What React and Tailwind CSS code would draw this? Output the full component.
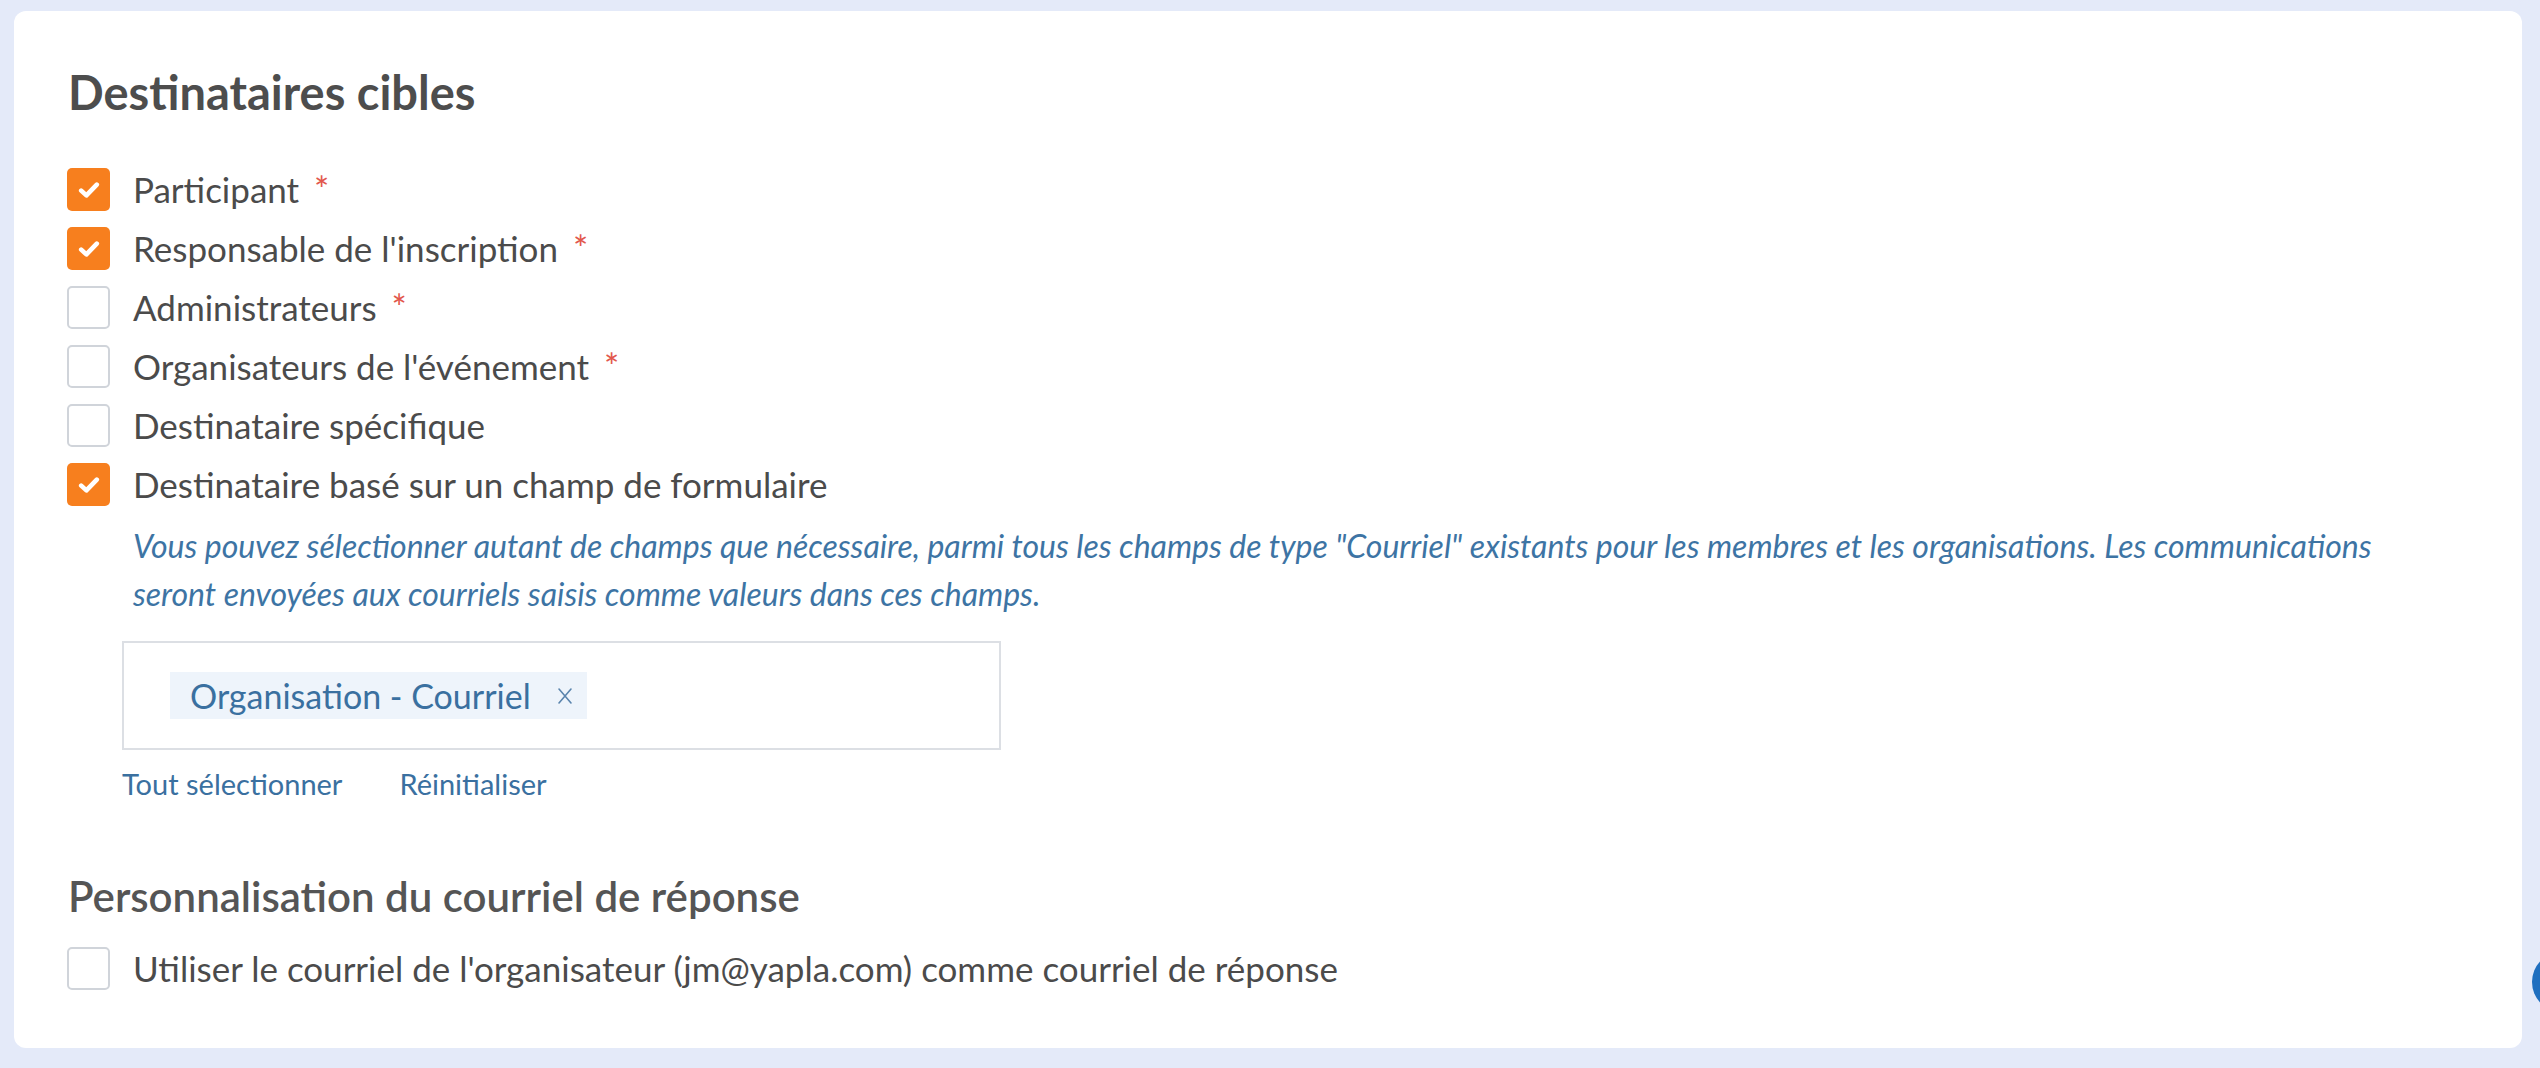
import React from "react";

function Check({ checked }) {
  if (checked) {
    return (
      <span className="flex h-[43px] w-[43px] shrink-0 items-center justify-center rounded-[5px] bg-[#f77f1e]">
        <svg width="22" height="18" viewBox="0 0 22 18" fill="none">
          <path d="M3.2 9.6 L8.4 14.4 L18.8 3.6" stroke="#ffffff" strokeWidth="4.6" strokeLinecap="round" strokeLinejoin="round" />
        </svg>
      </span>
    );
  }
  return <span className="h-[43px] w-[43px] shrink-0 rounded-[5px] border-2 border-[#d0d4da] bg-white" />;
}

function Row({ checked, label, required }) {
  return (
    <div className="flex h-[43px] items-center gap-[23px]">
      <Check checked={checked} />
      <span className="text-[35px] leading-[43px] text-[#4b4b4b]">
        {label}
        {required && <span className="ml-[15px] text-[36px] text-[#e2574c]">*</span>}
      </span>
    </div>
  );
}

export default function App() {
  const rows = [
    { checked: true, label: "Participant", required: true },
    { checked: true, label: "Responsable de l'inscription", required: true },
    { checked: false, label: "Administrateurs", required: true },
    { checked: false, label: "Organisateurs de l'événement", required: true },
    { checked: false, label: "Destinataire spécifique", required: false },
    { checked: true, label: "Destinataire basé sur un champ de formulaire", required: false },
  ];
  return (
    <div
      className="relative h-[1068px] w-full overflow-hidden bg-[#e4eaf9] pl-[14px] pr-[18px] pt-[11px]"
      style={{ fontFamily: "Lato, 'Noto Sans', sans-serif" }}
    >
      <div className="h-[1037px] rounded-[12px] bg-white pl-[53px] pr-[40px]">
        <h1 className="pt-[61px] pl-[1px] text-[47px] font-bold leading-[40px] text-[#4d4d4d]">
          Destinataires cibles
        </h1>
        <div className="mt-[56px] flex flex-col gap-[16px]">
          {rows.map((r) => (
            <Row key={r.label} {...r} />
          ))}
        </div>
        <div className="pl-[66px]">
          <p className="mt-[16px] max-w-[2280px] text-[32px] italic leading-[48px] text-[#3d74a4]">
            Vous pouvez sélectionner autant de champs que nécessaire, parmi tous les champs de type "Courriel" existants pour les membres et les organisations. Les communications seront envoyées aux courriels saisis comme valeurs dans ces champs.
          </p>
        </div>
        <div className="pl-[55px]">
          <div className="mt-[23px] flex h-[109px] w-[879px] items-center border-2 border-[#dcdfe4] pl-[46px]">
            <span className="flex h-[47px] items-center gap-[26px] bg-[#eef4fb] pl-[20px] pr-[14px] text-[34px] text-[#3a70a0]">
              Organisation - Courriel
              <svg width="16" height="18" viewBox="0 0 16 18" fill="none">
                <path d="M2 2 L14 16 M14 2 L2 16" stroke="#5a84ad" strokeWidth="1.6" strokeLinecap="round" />
              </svg>
            </span>
          </div>
          <div className="mt-[17px] flex gap-[57px] text-[29px] leading-[34px] text-[#3a70a0]">
            <span>Tout sélectionner</span>
            <span>Réinitialiser</span>
          </div>
        </div>
        <h2 className="mt-[75px] pl-[1px] text-[42px] font-semibold leading-[40px] text-[#555555]">
          Personnalisation du courriel de réponse
        </h2>
        <div className="mt-[31px]">
          <Row checked={false} label="Utiliser le courriel de l'organisateur (jm@yapla.com) comme courriel de réponse" />
        </div>
      </div>
      <div className="absolute left-[2532px] top-[952px] h-[60px] w-[60px] rounded-full bg-[#1f6fbf]" />
    </div>
  );
}
